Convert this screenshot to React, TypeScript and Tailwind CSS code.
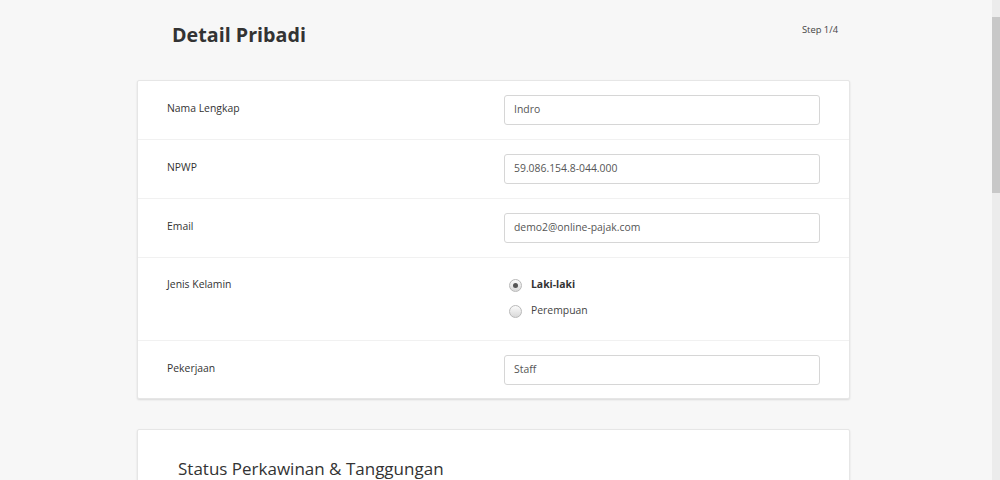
import React from "react";

const fields = [
    { label: "Nama Lengkap", value: "Indro" },
    { label: "NPWP", value: "59.086.154.8-044.000" },
    { label: "Email", value: "demo2@online-pajak.com" },
];

function Radio({ checked, label }: { checked?: boolean; label: string }) {
    return (
        <div className="flex items-center h-[26px]">
            <span className="ml-[5px] mr-[9px] h-[13px] w-[13px] rounded-full border border-[#b9b9b9] bg-gradient-to-b from-[#fbfbfb] to-[#d9d9d9] flex items-center justify-center">
                {checked && <span className="h-[5px] w-[5px] rounded-full bg-[#555]"></span>}
            </span>
            <span className={checked ? "font-bold text-[#333]" : "text-[#444]"}>{label}</span>
        </div>
    );
}

function TextRow({ label, value }: { label: string; value: string }) {
    return (
        <div className="flex items-start px-[29px] pt-[14px] pb-[14px] border-b border-[#f1f1f1]">
            <div className="flex-1 pt-[6px] text-[#333]">{label}</div>
            <div className="w-[316px] h-[30px] border border-[#d6d6d6] rounded-[3px] px-[9px] flex items-center text-[#555]">
                {value}
            </div>
        </div>
    );
}

export default function App() {
    return (
        <div className="flex h-[480px] overflow-hidden bg-[#f7f7f7] text-[10.4px]" style={{ fontFamily: '"Open Sans", "Liberation Sans", sans-serif' }}>
            <main className="flex-1">
                <div className="ml-[137px] w-[713px]">
                    {/* Header */}
                    <div className="flex justify-between h-[80px]">
                        <h1 className="ml-[35px] mt-[21px] text-[19.7px] leading-[28px] font-bold text-[#333]">Detail Pribadi</h1>
                        <span className="mr-[12px] mt-[23px] text-[9.4px] text-[#444]">Step 1/4</span>
                    </div>

                    {/* Detail card */}
                    <div className="bg-white border border-[#e6e6e6] rounded-[2px] shadow-[0_1px_2px_rgba(0,0,0,0.12)]">
                        {fields.map((f) => (
                            <TextRow key={f.label} label={f.label} value={f.value} />
                        ))}
                        <div className="flex items-start px-[29px] pt-[14px] pb-[16px] border-b border-[#f1f1f1]">
                            <div className="flex-1 pt-[5px] text-[#333]">Jenis Kelamin</div>
                            <div className="w-[316px]">
                                <Radio checked label="Laki-laki" />
                                <Radio label="Perempuan" />
                            </div>
                        </div>
                        <div className="flex items-start px-[29px] pt-[14px] pb-[13px]">
                            <div className="flex-1 pt-[6px] text-[#333]">Pekerjaan</div>
                            <div className="w-[316px] h-[30px] border border-[#d6d6d6] rounded-[3px] px-[9px] flex items-center text-[#555]">
                                Staff
                            </div>
                        </div>
                    </div>

                    {/* Status card */}
                    <div className="mt-[30px] bg-white border border-[#e6e6e6] rounded-[2px] shadow-[0_1px_2px_rgba(0,0,0,0.12)] h-[120px] pt-[27px] pl-[40px]">
                        <h2 className="text-[17px] leading-[24px] text-[#333]">Status Perkawinan &amp; Tanggungan</h2>
                    </div>
                </div>
            </main>

            {/* Scrollbar */}
            <div className="w-[8px] bg-[#ececec] pt-[17px]">
                <div className="h-[176px] bg-[#c8c8c8]"></div>
            </div>
        </div>
    );
}
